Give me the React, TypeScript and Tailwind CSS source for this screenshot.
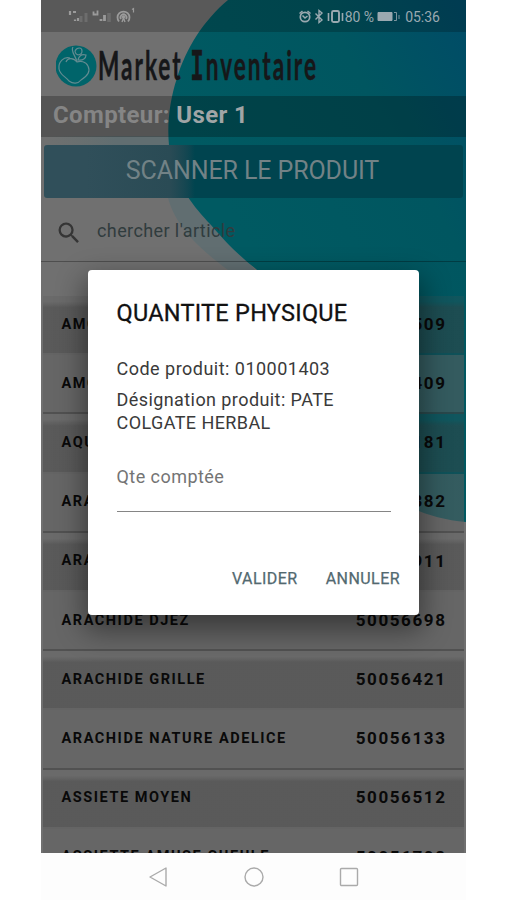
type Article = { name: string; code: string };

const articles: Article[] = [
  { name: "AMOU", code: "50056509" },
  { name: "AMOU", code: "50056409" },
  { name: "AQUA", code: "50056181" },
  { name: "ARACHIDE", code: "50056382" },
  { name: "ARACHIDE", code: "50056911" },
  { name: "ARACHIDE DJEZ", code: "50056698" },
  { name: "ARACHIDE GRILLE", code: "50056421" },
  { name: "ARACHIDE NATURE ADELICE", code: "50056133" },
  { name: "ASSIETE MOYEN", code: "50056512" },
  { name: "ASSIETTE AMUSE GUEULE", code: "50056708" },
];

function Backdrop() {
  return (
    <svg className="absolute inset-0" width="425" height="853" viewBox="41 0 425 853">
      <defs>
        <linearGradient id="teal" x1="0" y1="1" x2="1" y2="0">
          <stop offset="0.4" stopColor="#005a62" />
          <stop offset="0.75" stopColor="#005660" />
          <stop offset="1" stopColor="#004b67" />
        </linearGradient>
        <linearGradient id="halo" x1="0" y1="0" x2="1" y2="0">
          <stop offset="0" stopColor="#63706f" stopOpacity="0" />
          <stop offset="0.35" stopColor="#616e71" />
          <stop offset="1" stopColor="#616e71" />
        </linearGradient>
      </defs>
      <path d="M41 136H172L195 198L255 270H228C190 242 174 220 168 198V145H41Z" fill="url(#halo)" />
      <path
        d="M228 0C204 20 186 48 177 78C168 105 166 135 171 158C178 187 193 206 211 225C228 245 242 258 256 269C290 300 300 400 350 460C380 495 418 518 466 522V0Z"
        fill="url(#teal)"
      />
    </svg>
  );
}

function StatusBar() {
  return (
    <div className="flex h-8 items-start justify-between bg-black/20 pr-[26px] pl-[27px] text-[#9b9b9b]">
      <svg width="70" height="32" viewBox="68 0 70 32" fill="none" stroke="currentColor">
        <path d="M70 11v4M73 12h3M78 21v-3M75 21v-1.500" strokeWidth="2.200" />
        <path d="M81 22v-6M86 22v-9" strokeWidth="3" opacity=".3" />
        <path d="M93.500 11.500v3h3M97.500 10.500v5" strokeWidth="1.800" />
        <path d="M101 21v-2M104.500 21v-6" strokeWidth="2.800" />
        <path d="M109 22v-9" strokeWidth="3.500" opacity=".3" />
        <path d="M119 21.500a6 6 0 1 1 9 0M121 19a3 3 0 1 1 5 0" strokeWidth="1.800" />
        <circle cx="123.500" cy="17" r="1.300" fill="currentColor" />
        <path d="M122 22l1.500-4l1.500 4" strokeWidth="1.400" />
        <path d="M132 9.500l1.500-1v4" strokeWidth="1.200" />
      </svg>
      <div className="flex h-8 items-center text-[#9aa9b0]">
        <svg width="46" height="32" viewBox="300 0 46 32" fill="none" stroke="currentColor">
          <circle cx="306" cy="17" r="4.700" strokeWidth="1.700" />
          <path d="M300.500 13.500l3-2.500M311.500 13.500l-3-2.500M303.500 15.500l2.500 2.500l2.500-2" strokeWidth="1.500" />
          <path d="M316.500 13.500l6.500 6.500l-3 2.500v-12l3 2.500l-6.500 6.500" strokeWidth="1.400" />
          <rect x="333" y="11" width="7" height="11" rx="1.500" strokeWidth="1.900" />
          <path d="M329.500 13v8M343.500 13v8" strokeWidth="1.600" />
        </svg>
        <span className="mt-0.5 text-[14px]">80 %</span>
        <svg className="ml-[3px]" width="24" height="32" viewBox="379 0 24 32" fill="none" stroke="currentColor">
          <path d="M380 12.500h14v8h-14z" fill="currentColor" />
          <path d="M396 12.500h2.500v8h-2.500M401 15v4" opacity=".8" />
        </svg>
        <span className="mt-0.5 ml-[4px] text-[14px]">05:36</span>
      </div>
    </div>
  );
}

function Brand() {
  return (
    <div className="h-16 shrink-0 pl-[15px]">
      <svg width="275" height="64" viewBox="56 32 275 64">
        <circle cx="76" cy="66" r="20.500" fill="#00646a" />
        <g fill="none" stroke="#628b91" strokeWidth="1.200">
          <path d="M70 58C64 56 58 62 59 69C60 75 65 76 69 81C73 84 78 84 81 80C86 77 91 72 88 66C86 61 80 61 77 62C74 58 68 57 66 62" />
          <path d="M77 62C76 56 70 51 73 47M78 60C83 61 86 58 86 55C82 54 79 56 78 60ZM75 51C77 47 82 47 82 51S76 57 75 51" />
        </g>
        <text
          x="98"
          y="80"
          textLength="220"
          lengthAdjust="spacingAndGlyphs"
          letterSpacing="3.500"
          fill="#161719"
          stroke="#161719"
          strokeWidth=".4"
          fontSize="40"
          fontWeight="700"
          fontFamily="Lato, sans-serif"
        >
          Market <tspan fontFamily="DejaVu Sans Mono, monospace">I</tspan>nventaire
        </text>
      </svg>
    </div>
  );
}

function ArticleRow({ article, dark }: { article: Article; dark: boolean }) {
  return (
    <div
      className={
        "mx-0.5 flex h-[59.200px] shrink-0 items-center justify-between border-b-2 pr-[17.500px] pl-[18.500px] font-bold text-[#090909] " +
        (dark
          ? "border-black/5 bg-linear-to-b from-[#505050]/20 from-10% to-[#404040]/45 to-20%"
          : "border-black/20 bg-[#5e5e5e]/55")
      }
    >
      <span className="text-[14.500px] tracking-[1.550px]">{article.name}</span>
      <span className="text-[17px] tracking-[1.600px]">{article.code}</span>
    </div>
  );
}

function QuantityDialog() {
  return (
    <div className="absolute top-[270px] left-[47px] flex h-[345px] w-[331px] flex-col rounded-[4px] bg-white px-[28.500px] shadow-[0_12px_28px_4px_rgba(0,0,0,0.42)]">
      <h2 className="mt-[29px] text-[23.500px] leading-[28px] font-normal tracking-[0.260px] text-[#111] [-webkit-text-stroke:0.3px_#111]">
        QUANTITE PHYSIQUE
      </h2>
      <p className="mt-[30px] text-[18px] leading-[23px] tracking-[0.480px] text-[#3a3a3a]">Code produit: 010001403</p>
      <p className="mt-2 text-[18px] leading-[23px] tracking-[0.420px] text-[#3a3a3a]">
        Désignation produit: PATE
        <br />
        COLGATE HERBAL
      </p>
      <div className="mt-8 h-[46px] w-[274px] border-b border-[#858585] text-[18px] leading-[22px] tracking-[0.450px] text-[#747474]">
        Qte comptée
      </div>
      <div className="-mr-[9.500px] mt-[57px] flex justify-end gap-[28px] text-[16px] leading-5 tracking-[0.450px] text-[#526970] [-webkit-text-stroke:0.250px_#526970]">
        <button>VALIDER</button>
        <button>ANNULER</button>
      </div>
    </div>
  );
}

function NavBar() {
  return (
    <div className="flex h-[47px] items-center justify-between bg-[#fdfdfd] px-[107px]">
      <svg width="20" height="22" viewBox="0 0 20 22" fill="none" stroke="#aaa" strokeWidth="1.400" strokeLinejoin="round">
        <path d="M18 2v18L2 11z" />
      </svg>
      <svg width="20" height="22" viewBox="0 0 20 22" fill="none" stroke="#aaa" strokeWidth="1.400">
        <circle cx="10" cy="11" r="9" />
      </svg>
      <svg width="20" height="22" viewBox="0 0 20 22" fill="none" stroke="#aaa" strokeWidth="1.400">
        <rect x="1.500" y="2.500" width="17" height="17" rx="1" />
      </svg>
    </div>
  );
}

export default function App() {
  return (
    <main className="h-[900px] w-[506px] overflow-hidden bg-white pl-[41px] font-[Roboto,sans-serif]">
      <div className="w-[425px]">
        <div className="relative h-[853px] overflow-hidden bg-[#707070]">
          <Backdrop />
          <div className="relative flex h-full flex-col">
            <StatusBar />
            <Brand />
            <div className="h-[41px] shrink-0 bg-black/25 pl-[12px] text-[24px] leading-[39px] font-bold tracking-[0.370px] text-[#858585]">
              Compteur: <span className="text-[#a0a5a6]">User 1</span>
            </div>
            <div className="mx-[3px] mt-[8px] flex h-[53px] shrink-0 items-center justify-center rounded-[3px] bg-linear-to-r from-[#304f5a] from-10% via-[#2a4b55] via-30% to-[#00444f] to-36% text-[25px] text-[#728286]">
              <span className="-mt-[2px] -ml-[2px] tracking-[-0.100px]">SCANNER LE PRODUIT</span>
            </div>
            <div className="flex h-[64px] shrink-0 items-center border-b border-black/30 pl-[14px] text-[#303c3e]">
              <svg width="28" height="28" viewBox="0 0 24 24" fill="#353535" className="mt-[7px]">
                <path d="M15.500 14h-.79l-.28-.27A6.470 6.470 0 0 0 16 9.500 6.500 6.500 0 1 0 9.500 16c1.610 0 3.090-.59 4.230-1.570l.27.28v.79l5 4.990L20.490 19l-4.990-5zm-6 0C7.010 14 5 11.990 5 9.500S7.010 5 9.500 5 14 7.010 14 9.500 11.990 14 9.500 14z" />
              </svg>
              <span className="mt-px ml-[14px] text-[18px] tracking-[0.400px]">chercher l'article</span>
            </div>
            <div className="flex flex-col pt-[34px]">
              {articles.map((article, i) => (
                <ArticleRow key={i} article={article} dark={i % 2 === 0} />
              ))}
            </div>
          </div>
          <QuantityDialog />
        </div>
        <NavBar />
      </div>
    </main>
  );
}
